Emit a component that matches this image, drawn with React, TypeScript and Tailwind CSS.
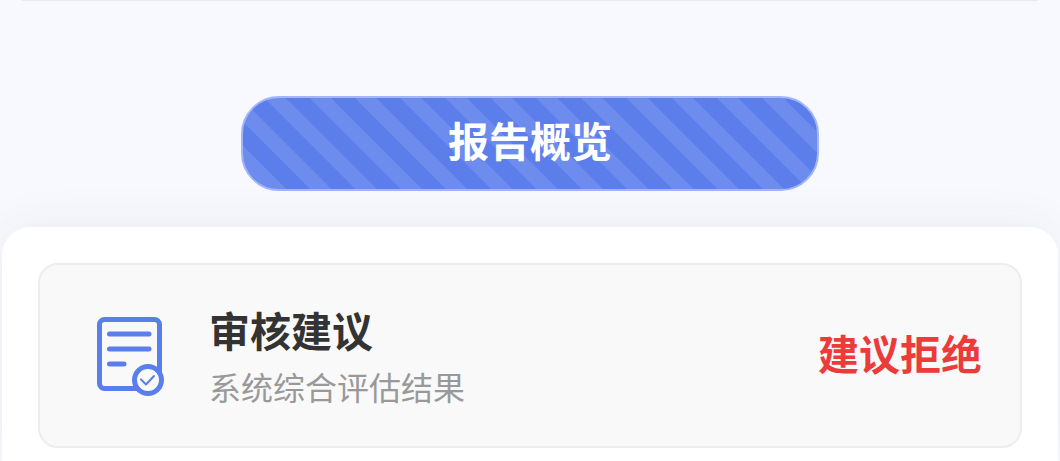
function ReportIcon() {
  return (
    <svg className="w-[68px] h-20 shrink-0" viewBox="0 0 68 80" fill="none" stroke="#5b7eed" strokeLinecap="round" aria-hidden="true">
      <rect x="3.5" y="3.5" width="60" height="69" rx="5" strokeWidth="5" />
      <path d="M13.500 18H53M13.500 33H53M13.500 48H28" strokeWidth="5" />
      <circle cx="52" cy="64" r="13.500" fill="#f9f9f9" strokeWidth="5" />
      <path d="M45 63.500l5 5 8-8.500" strokeWidth="2" strokeLinejoin="round" />
    </svg>
  )
}

function SectionHeader({ title }: { title: string }) {
  return (
    <h2
      className="mx-auto w-[578px] max-w-full rounded-[38px] border-2 border-[#a3b6fb] pt-3 pb-5 text-center
                 text-[41px] leading-[59px] font-bold text-white bg-[#5c7eeb]
                 bg-[repeating-linear-gradient(45deg,#5c7eeb_0px,#5c7eeb_15px,#6d8cee_16px,#6d8cee_30px,#5c7eeb_31px,#5c7eeb_32px)]"
    >
      {title}
    </h2>
  )
}

interface SummaryCardProps {
  title: string
  description: string
  result: string
}

function SummaryCard({ title, description, result }: SummaryCardProps) {
  return (
    <div className="flex items-center gap-[45px] rounded-[20px] border-2 border-[#ededed] bg-[#f9f9f9] py-9 pl-14 pr-[38px]">
      <ReportIcon />
      <div className="flex-1">
        <h3 className="text-[41px] leading-[57px] font-bold text-[#333333]">{title}</h3>
        <p className="pt-1 text-[32px] leading-[48px] text-[#999999]">{description}</p>
      </div>
      <strong className="pb-2 text-[41px] leading-[60px] font-bold text-[#ec3b3b]">{result}</strong>
    </div>
  )
}

export default function App() {
  return (
    <main className="flex min-h-screen flex-col overflow-hidden bg-[#f7f9fe] px-0.5 font-['Noto_Sans_CJK_SC',sans-serif]">
      <div className="mx-5 h-px bg-[#e9eaef] shadow-[0_2px_4px_rgba(0,0,0,0.05)]" />
      <div className="pt-[95px] pb-9">
        <SectionHeader title="报告概览" />
      </div>
      <section className="flex-1 rounded-t-[28px] bg-white px-9 pt-9 pb-3 shadow-[0_0_48px_rgba(50,50,90,0.07)]">
        <SummaryCard title="审核建议" description="系统综合评估结果" result="建议拒绝" />
      </section>
    </main>
  )
}
